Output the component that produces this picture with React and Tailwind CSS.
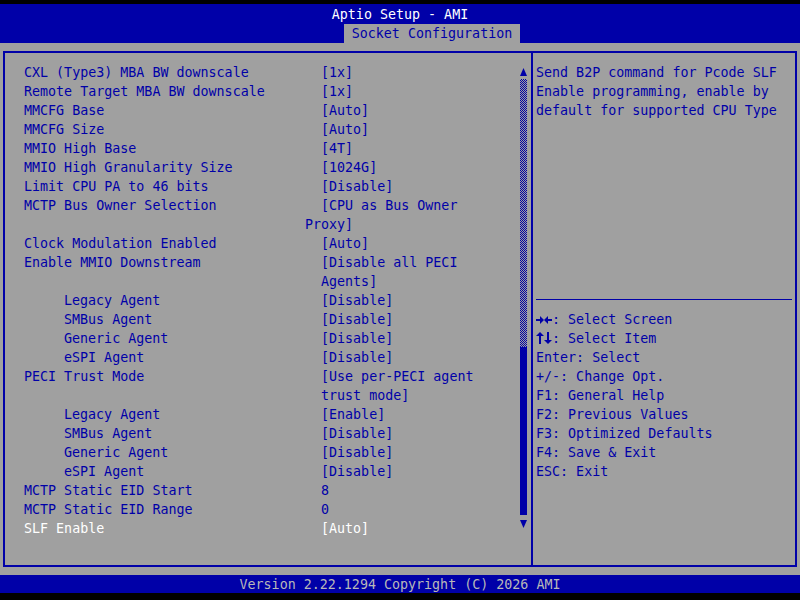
import React from 'react';

const rows = [
    { label: 'CXL (Type3) MBA BW downscale', value: ['[1x]'] },
    { label: 'Remote Target MBA BW downscale', value: ['[1x]'] },
    { label: 'MMCFG Base', value: ['[Auto]'] },
    { label: 'MMCFG Size', value: ['[Auto]'] },
    { label: 'MMIO High Base', value: ['[4T]'] },
    { label: 'MMIO High Granularity Size', value: ['[1024G]'] },
    { label: 'Limit CPU PA to 46 bits', value: ['[Disable]'] },
    { label: 'MCTP Bus Owner Selection', value: ['[CPU as Bus Owner', 'Proxy]'], shift: true },
    { label: 'Clock Modulation Enabled', value: ['[Auto]'] },
    { label: 'Enable MMIO Downstream', value: ['[Disable all PECI', 'Agents]'] },
    { label: 'Legacy Agent', value: ['[Disable]'], sub: true },
    { label: 'SMBus Agent', value: ['[Disable]'], sub: true },
    { label: 'Generic Agent', value: ['[Disable]'], sub: true },
    { label: 'eSPI Agent', value: ['[Disable]'], sub: true },
    { label: 'PECI Trust Mode', value: ['[Use per-PECI agent', 'trust mode]'] },
    { label: 'Legacy Agent', value: ['[Enable]'], sub: true },
    { label: 'SMBus Agent', value: ['[Disable]'], sub: true },
    { label: 'Generic Agent', value: ['[Disable]'], sub: true },
    { label: 'eSPI Agent', value: ['[Disable]'], sub: true },
    { label: 'MCTP Static EID Start', value: ['8'] },
    { label: 'MCTP Static EID Range', value: ['0'] },
    { label: 'SLF Enable', value: ['[Auto]'], selected: true },
];

const keys = [
    'Enter: Select',
    '+/-: Change Opt.',
    'F1: General Help',
    'F2: Previous Values',
    'F3: Optimized Defaults',
    'F4: Save & Exit',
    'ESC: Exit',
];

// left/right and up/down arrow pairs, drawn like the BIOS glyphs
const LeftRight = () => (
    <svg className="inline-block align-[-1px]" width="16" height="10" viewBox="0 0 16 10" fill="#0000a8">
        <rect x="0" y="4" width="5" height="2" />
        <polygon points="4,1 8,5 4,9" />
        <polygon points="12,1 8,5 12,9" />
        <rect x="11" y="4" width="5" height="2" />
    </svg>
);

const UpDown = () => (
    <svg className="inline-block align-[-1px]" width="16" height="12" viewBox="0 0 16 12" fill="#0000a8">
        <polygon points="4,0 8,4 0,4" />
        <rect x="3" y="3" width="2" height="9" />
        <rect x="11" y="0" width="2" height="9" />
        <polygon points="8,8 16,8 12,12" />
    </svg>
);

const SettingRow = ({ row }) => {
    const color = row.selected ? 'text-white' : 'text-[#0000a8]';
    return (
        <div className={`grid grid-cols-[297px_1fr] ${color}`}>
            <div className={`whitespace-pre ${row.sub ? 'pl-[40px]' : ''}`}>{row.label}</div>
            <div className="whitespace-pre">
                {row.value.map((line, i) => (
                    <div key={i} className={i > 0 && row.shift ? '-ml-[16px]' : ''}>{line}</div>
                ))}
            </div>
        </div>
    );
};

const Scrollbar = () => (
    <div className="w-[7px] mr-[4px] pt-[15px] flex flex-col items-center">
        <svg width="7" height="8" viewBox="0 0 7 8">
            <polygon points="3.5,0 7,8 0,8" fill="#0000a8" />
        </svg>
        <div className="w-[7px] h-[268px] mt-[3px] bg-[repeating-conic-gradient(#0000a8_0_25%,#a0a0a0_0_50%)] bg-[length:2px_2px]" />
        <div className="w-[7px] h-[168px] bg-[#0000a8]" />
        <svg className="mt-[5px]" width="7" height="8" viewBox="0 0 7 8">
            <polygon points="0,0 7,0 3.5,8" fill="#0000a8" />
        </svg>
    </div>
);

export default function App() {
    return (
        <div className="w-[800px] h-[600px] bg-[#a0a0a0] flex flex-col font-['DejaVu_Sans_Mono',monospace] text-[13.33px] leading-[19px] overflow-hidden">
            <div className="h-[4px] bg-black" />
            <div className="h-[39px] bg-[#0000a8] flex flex-col items-center">
                <div className="h-[20px] leading-[21px] text-white">Aptio Setup - AMI</div>
                <div className="ml-[64px] h-[19px] px-[8px] bg-[#a0a0a0] text-[#0000a8] leading-[20px]">Socket Configuration</div>
            </div>

            <div className="mt-[8px] mx-[3px] h-[516px] border-2 border-[#0000a8] flex">
                <div className="w-[526px] flex">
                    <div className="flex-1 pl-[19px] pt-[10px]">
                        {rows.map((row, i) => (
                            <SettingRow key={i} row={row} />
                        ))}
                    </div>
                    <Scrollbar />
                </div>
                <div className="w-[2px] bg-[#0000a8]" />
                <div className="flex-1 pl-[3px] pr-[3px] text-[#0000a8]">
                    <div className="h-[246px] pt-[10px] whitespace-pre">
                        <div>Send B2P command for Pcode SLF</div>
                        <div>Enable programming, enable by</div>
                        <div>default for supported CPU Type</div>
                    </div>
                    <div className="h-px bg-[#0000a8]" />
                    <div className="pt-[10px] whitespace-pre">
                        <div><LeftRight />: Select Screen</div>
                        <div><UpDown />: Select Item</div>
                        {keys.map((k, i) => (
                            <div key={i}>{k}</div>
                        ))}
                    </div>
                </div>
            </div>

            <div className="mt-[8px] h-[18px] bg-[#0000a8] text-[#b8b8b8] text-center leading-[19px]">
                Version 2.22.1294 Copyright (C) 2026 AMI
            </div>
            <div className="flex-1 bg-black" />
        </div>
    );
}
